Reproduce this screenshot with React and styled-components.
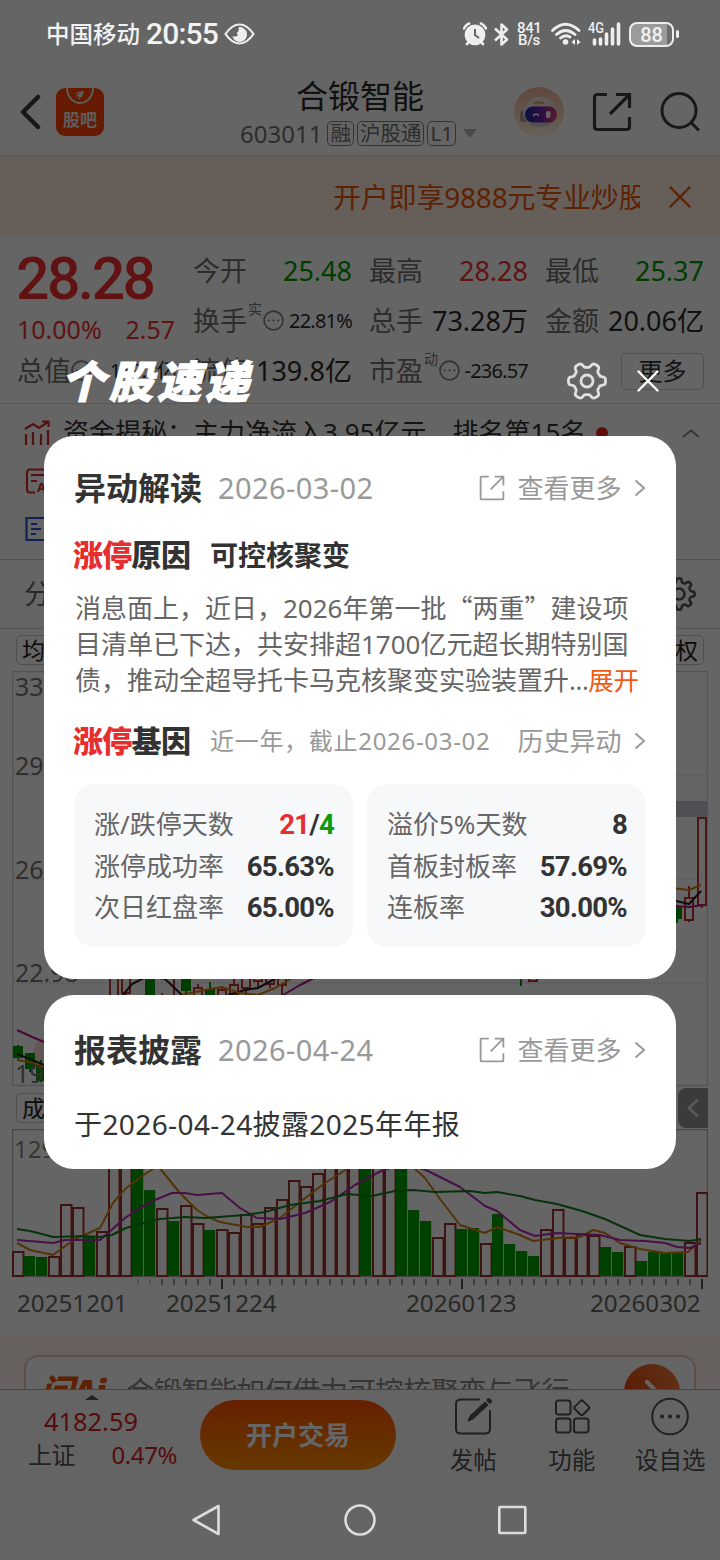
import React from "react";
import styled, { createGlobalStyle } from "styled-components";

const GlobalStyle = createGlobalStyle`
  * {
    box-sizing: border-box;
  }
  body {
    margin: 0;
    font-family: "Noto Sans", "Noto Sans CJK SC", sans-serif;
    line-height: 1.4;
    background: #fff;
  }
  button {
    padding: 0;
    border: 0;
    background: none;
    font-family: inherit;
  }
  svg {
    display: block;
    flex-shrink: 0;
  }
`;

const RED = "#f23030";
const GREEN = "#009c00";

const PhoneDiv = styled.div`
  position: relative;
  width: 720px;
  height: 1560px;
  overflow: hidden;
`;
const PageDiv = styled.div`
  display: flex;
  flex-direction: column;
  height: 1560px;
  background: #fdfdfd;
  color: #333;
`;

/* ---------- 顶部 ---------- */
const HeaderDiv = styled.header`
  display: flex;
  align-items: center;
  height: 157px;
  padding: 68px 20px 0;
  border-bottom: 2px solid #e0e0e0;
`;
const HeaderSideDiv = styled.div`
  display: flex;
  flex: 1;
  align-items: center;
  justify-content: ${(props) => (props.$end ? "flex-end" : "flex-start")};
  gap: ${(props) => (props.$end ? "28px" : "15px")};
`;
const HeaderCenterDiv = styled.div`
  display: flex;
  flex-direction: column;
  align-items: center;
  margin-right: 3px;
`;
const StockNameStrong = styled.strong`
  padding-left: 3px;
  font-size: 32px;
  font-weight: 400;
  line-height: 44px;
  color: #2c2c2c;
`;
const StockCodeDiv = styled.div`
  display: flex;
  align-items: center;
  height: 32px;
  font-size: 24px;
  color: #707070;
`;
const TagSpan = styled.span`
  height: 25px;
  margin-left: 3px;
  padding: 0 2px;
  border: 1.5px solid #808080;
  border-radius: 5px;
  font-size: 20.5px;
  line-height: 22px;
`;
const CodeSpan = styled.span`
  margin-right: 2px;
`;
const ArrowDownI = styled.i`
  margin-left: 7px;
  border: 7px solid transparent;
  border-top: 9px solid #b4b4b4;
  border-bottom: 0;
`;
const BannerDiv = styled.div`
  display: flex;
  align-items: center;
  justify-content: flex-end;
  height: 80px;
  padding-right: 29px;
  gap: 29px;
  background: #ffebdc;
`;
const BannerP = styled.p`
  width: 307px;
  margin: 0;
  overflow: hidden;
  white-space: nowrap;
  font-size: 28px;
  line-height: 40px;
  letter-spacing: -0.2px;
  color: #e8560c;
`;

/* ---------- 行情 ---------- */
const QuoteDiv = styled.section`
  display: grid;
  grid-template-columns: 160px 160px 160px 160px;
  grid-template-rows: 50px 50px 50px;
  column-gap: 16px;
  height: 167px;
  padding: 9px 16px 0;
  border-bottom: 1px solid #dcdcdc;
`;
const PriceStrong = styled.strong`
  font-family: Roboto, sans-serif;
  font-size: 59px;
  font-weight: 500;
  line-height: 65px;
  letter-spacing: -2.6px;
  color: ${RED};
`;
const QuoteCellDiv = styled.div`
  display: flex;
  align-items: center;
  justify-content: space-between;
  height: 50px;
  white-space: nowrap;
  font-size: ${(props) => (props.$small ? "20px" : "27px")};
  letter-spacing: ${(props) => (props.$small ? "-0.8px" : "0")};
  color: ${(props) => props.$color || "#2c2c2c"};
`;
const ChangeDiv = styled(QuoteCellDiv)`
  margin-top: 8px;
  padding: 0 1px;
  font-size: 25px;
`;
const LabelSpan = styled.span`
  display: flex;
  align-items: center;
  padding-left: 1px;
  font-size: 27px;
  letter-spacing: 0;
  color: #707070;
`;
const SupSpan = styled.sup`
  align-self: flex-start;
  margin: -1px 1px 0;
  font-size: 14px;
  line-height: 16px;
`;
const MoreButton = styled.button`
  width: 83px;
  height: 37px;
  margin-left: auto;
  border: 1px solid #c4c8cc;
  border-radius: 5px;
  font-size: 24px;
  line-height: 32px;
  color: #333;
`;
const NewsDiv = styled.section`
  display: flex;
  flex-direction: column;
  height: 156px;
  padding: 5px 20px 0 24px;
  border-bottom: 1px solid #c8c8c8;
`;
const NewsRowDiv = styled.div`
  display: flex;
  align-items: center;
  height: 48px;
  gap: 13px;
  font-size: 26px;
  line-height: 36px;
  white-space: nowrap;
  color: #333;
`;
const NewsSpan = styled.span`
  margin-bottom: 2px;
`;
const DotI = styled.i`
  width: 12px;
  height: 12px;
  margin-left: -3px;
  border-radius: 50%;
  background: #f02020;
`;
const CaretDiv = styled.div`
  margin-left: auto;
`;
const TabsDiv = styled.div`
  display: flex;
  align-items: center;
  justify-content: space-between;
  height: 69px;
  padding: 0 24px;
  border-bottom: 1px solid #d0d0d0;
  font-size: 27px;
  color: #666;
`;
const ToolRowDiv = styled.div`
  display: flex;
  align-items: center;
  justify-content: space-between;
  height: 42px;
  padding: 0 16px;
`;
const ToolButton = styled.button`
  height: 30px;
  padding: 0 5px;
  border: 1px solid #c8c8c8;
  border-radius: 5px;
  font-size: 23px;
  line-height: 27px;
  color: #222;
`;
const ChartDiv = styled.div`
  padding-left: 12px;
`;
const DatesDiv = styled.div`
  display: flex;
  height: 45px;
  padding-left: 17px;
  font-size: 24.2px;
  line-height: 25px;
  color: #666;
`;
const DateSpan = styled.span`
  width: ${(props) => props.$width}px;
`;
const FoldButton = styled.button`
  position: absolute;
  top: 1088px;
  right: 12px;
  display: flex;
  align-items: center;
  justify-content: center;
  width: 30px;
  height: 40px;
  border-radius: 8px 0 0 8px;
  background: #949494;
`;

/* ---------- 底部 ---------- */
const AskDiv = styled.div`
  height: 54px;
  padding: 20px 24px 0;
  overflow: hidden;
  background: #fff1ec;
`;
const AskBoxDiv = styled.div`
  display: flex;
  align-items: center;
  height: 74px;
  padding: 0 14px 0 14px;
  border: 2px solid #f0bdb4;
  border-radius: 14px;
  background: #fdfdfd;
  font-size: 28px;
  letter-spacing: -0.3px;
  color: #888;
`;
const AskLogoSpan = styled.span`
  width: 86px;
  font-size: 34px;
  font-weight: 900;
  font-style: italic;
  letter-spacing: -1px;
  color: #e8560c;
`;
const AskCircleDiv = styled.div`
  display: flex;
  align-items: center;
  justify-content: center;
  width: 56px;
  height: 56px;
  margin-left: auto;
  border-radius: 50%;
  background: linear-gradient(60deg, #e03a00, #f08040);
`;
const BottomDiv = styled.footer`
  display: flex;
  height: 91px;
  border-top: 1px solid #aaa;
  background: #fafafa;
`;
const IndexDiv = styled.div`
  width: 184px;
  padding: 5px 7px 0 28px;
  color: #d81e1e;
`;
const UpI = styled.i`
  display: block;
  width: 0;
  margin: 0 0 0 57px;
  border: 7px solid transparent;
  border-top: 0;
  border-bottom: 5px solid #555;
`;
const IndexValueDiv = styled.div`
  padding: 2px 0 0 16px;
  font-size: 25.4px;
  line-height: 38px;
`;
const IndexRowDiv = styled.div`
  display: flex;
  justify-content: space-between;
  font-size: 24px;
  line-height: 30px;
  letter-spacing: -0.4px;
`;
const IndexNameSpan = styled.span`
  color: #555;
`;
const TradeButton = styled.button`
  width: 196px;
  height: 70px;
  margin: 10px 0 0 16px;
  border-radius: 35px;
  background: linear-gradient(#ff5000, #ff9000);
  font-size: 26px;
  font-weight: 700;
  line-height: 68px;
  color: #fff;
`;
const ActionsDiv = styled.div`
  display: flex;
  margin-left: 28px;
`;
const ActionDiv = styled.div`
  display: flex;
  flex-direction: column;
  align-items: center;
  width: 98.5px;
  padding-top: 6px;
  font-size: 23.5px;
  line-height: 48px;
  white-space: nowrap;
  color: #505050;
`;

/* ---------- 蒙层 ---------- */
const MaskDiv = styled.div`
  position: absolute;
  inset: 0;
  display: flex;
  flex-direction: column;
  background: rgba(0, 0, 0, 0.6);
`;
const StatusDiv = styled.div`
  display: flex;
  align-items: center;
  justify-content: space-between;
  height: 68px;
  padding: 0 41px 0 46px;
  color: #f2f2f2;
`;
const StatusGroupDiv = styled.div`
  display: flex;
  align-items: center;
  gap: ${(props) => props.$gap}px;
`;
const CarrierSpan = styled.span`
  font-size: 23.5px;
  font-weight: 500;
  line-height: 32px;
`;
const ClockSpan = styled.span`
  font-family: Roboto, sans-serif;
  font-size: 30px;
  font-weight: 500;
  line-height: 32px;
  letter-spacing: -0.8px;
`;
const SpeedSpan = styled.span`
  width: 24px;
  margin: 0 3px 0 1px;
  font-family: Roboto, sans-serif;
  font-size: 15px;
  font-weight: 500;
  line-height: 12.5px;
  letter-spacing: -0.4px;
  text-align: center;
`;
const BatteryDiv = styled.div`
  width: 45px;
  height: 25px;
  border: 2px solid #eee;
  border-radius: 8px;
  background: linear-gradient(90deg, #9b9b9b 88%, #6c6c6c 88%);
  font-family: Roboto, sans-serif;
  font-size: 20px;
  font-weight: 500;
  line-height: 22px;
  text-align: center;
`;
const BatteryNubI = styled.i`
  width: 3px;
  height: 8px;
  margin-left: -5px;
  border-radius: 2px;
  background: #eee;
`;
const ModalDiv = styled.section`
  display: flex;
  flex-direction: column;
  height: 1412px;
  padding: 286px 44px 0;
`;
const ModalHeadDiv = styled.div`
  display: flex;
  align-items: center;
  height: 54px;
  margin-bottom: 28px;
  padding: 0 17px;
`;
const ModalTitle = styled.h1`
  flex: 1;
  margin: 0;
  font-size: 44px;
  font-weight: 900;
  font-style: italic;
  line-height: 50px;
  letter-spacing: 4px;
  -webkit-text-stroke: 1px #fff;
  color: #fff;
`;
const CloseButton = styled.button`
  margin-left: 30px;
`;
const CardDiv = styled.article`
  height: ${(props) => props.$height}px;
  margin-bottom: 16px;
  padding: 29px 30px 0;
  border-radius: 30px;
  background: #fff;
`;
const RowDiv = styled.div`
  display: flex;
  align-items: center;
  height: ${(props) => props.$height || 46}px;
  margin-top: ${(props) => props.$top || 0}px;
  white-space: nowrap;
`;
const CardTitle = styled.h2`
  margin: 0 16px 0 0;
  font-size: 32px;
  font-weight: 700;
  line-height: 46px;
  color: #333;
`;
const DateTime = styled.time`
  font-size: ${(props) => props.$size || 29}px;
  letter-spacing: ${(props) => props.$spacing || 0.4}px;
  color: #999;
`;
const LinkA = styled.a`
  display: flex;
  align-items: center;
  margin-left: auto;
  gap: 12.5px;
  font-size: 26px;
  color: #999;
`;
const BadgeTitle = styled.h3`
  width: 137px;
  margin: 0 0 0 -1px;
  font-size: 30px;
  font-weight: 900;
  line-height: 40px;
  letter-spacing: -0.7px;
  color: #333;
`;
const ColorSpan = styled.span`
  color: ${(props) => props.$color};
`;
const ReasonStrong = styled.strong`
  font-size: 28px;
  font-weight: 700;
  line-height: 40px;
  color: #333;
`;
const ReasonP = styled.p`
  margin: 14px 0 0 1px;
  font-size: 26px;
  line-height: 36px;
  white-space: nowrap;
  color: #666;
`;
// 引号需要全角宽度
const QuoteSpan = styled.span`
  font-family: "Noto Sans CJK SC", sans-serif;
  line-height: 1;
`;
const ExpandSpan = styled.span`
  font-size: 25.5px;
  letter-spacing: -0.4px;
  color: #f05a14;
`;
const StatsDiv = styled.div`
  display: grid;
  grid-template-columns: 279px 279px;
  gap: 14px;
  margin-top: 22px;
`;
const StatBoxUl = styled.ul`
  height: 163px;
  margin: 0;
  padding: 20px 19px 0 20px;
  border-radius: 20px;
  background: #f7f8fa;
  list-style: none;
`;
const StatLi = styled.li`
  display: flex;
  justify-content: space-between;
  font-size: 26px;
  line-height: 41.5px;
  white-space: nowrap;
  color: #666;
`;
const StatStrong = styled.strong`
  font-family: Roboto, sans-serif;
  font-size: 27.5px;
  font-weight: 700;
  letter-spacing: -0.7px;
  color: #333;
`;
const ReportP = styled.p`
  margin: 26px 0 0;
  font-size: 28px;
  line-height: 44px;
  letter-spacing: 0.4px;
  color: #333;
`;
const NavDiv = styled.nav`
  display: flex;
  align-items: center;
  justify-content: center;
  height: 80px;
  gap: 122px;
`;

/* ---------- 图标 ---------- */
function gearPath(c, r, depth, teeth) {
  const points = [];
  for (let i = 0; i < 240; i += 1) {
    const t = (i / 240) * Math.PI * 2;
    const k = r - depth / 2 + (depth / 2) * Math.tanh(2.2 * Math.cos(teeth * t));
    points.push(`${(c + k * Math.cos(t)).toFixed(2)} ${(c + k * Math.sin(t)).toFixed(2)}`);
  }
  return `M${points.join("L")}Z`;
}

function GearIcon({ size, teeth, depth, hole, color, width }) {
  const c = size / 2;
  return (
    <svg width={size} height={size} fill="none" stroke={color} strokeWidth={width} strokeLinejoin="round">
      <path d={gearPath(c, c - width / 2, depth, teeth)} />
      <circle cx={c} cy={c} r={hole} />
    </svg>
  );
}

function ShareIcon({ size, color, width, radius }) {
  return (
    <svg width={size} height={size} viewBox="0 0 40 40" fill="none" stroke={color} strokeWidth={width} strokeLinecap="butt">
      <path d={`M15 2.5H${2.5 + radius}Q2.5 2.5 2.5 ${2.5 + radius}V${37.5 - radius}Q2.5 37.5 ${2.5 + radius} 37.5H${37.5 - radius}Q37.5 37.5 37.5 ${37.5 - radius}V25`} />
      <path d="M24 2.5H37.5V16M37 3L18 22" />
    </svg>
  );
}

function MoreDotsIcon({ size, stroke = 1.6 }) {
  return (
    <svg width={size} height={size} viewBox="0 0 20 20" fill="none" stroke="#808080" strokeWidth={stroke}>
      <circle cx="10" cy="10" r="9" />
      <path d="M5.4 10h.1M10 10h.1M14.5 10h.1" strokeWidth="2" strokeLinecap="round" />
    </svg>
  );
}

function ChevronIcon() {
  return (
    <svg width="12" height="18" fill="none" stroke="#999" strokeWidth="2">
      <path d="M1.5 1.5L10 9L1.5 16.5" />
    </svg>
  );
}

function CloseIcon({ color, width }) {
  return (
    <svg width="22" height="22" fill="none" stroke={color} strokeWidth={width} strokeLinecap="round">
      <path d="M1.5 1.5L20.5 20.5M20.5 1.5L1.5 20.5" />
    </svg>
  );
}

function GubaLogo() {
  return (
    <svg width="48" height="48">
      <rect width="48" height="48" rx="9" fill="#ff4400" />
      <path d="M11 0A13 15 0 0 0 37 0" fill="none" stroke="#e8e8e8" strokeWidth="2" />
      <path d="M18 6Q23 3 28 3Q27 9 22 12L23 8L19 9L24 5Z" fill="#e8e8e8" />
      <text x="24" y="37.5" textAnchor="middle" fontSize="17" fontWeight="700" fill="#e8e8e8">股吧</text>
    </svg>
  );
}

function RobotAvatar() {
  return (
    <svg width="50" height="50">
      <defs>
        <linearGradient id="robotBg" x1="0" y1="0" x2="0" y2="1">
          <stop offset="0" stopColor="#f0b496" />
          <stop offset="1" stopColor="#fff0dc" />
        </linearGradient>
        <linearGradient id="robotFace">
          <stop offset="0" stopColor="#1c2a9c" />
          <stop offset="0.5" stopColor="#6c1ea8" />
          <stop offset="1" stopColor="#e8446c" />
        </linearGradient>
        <linearGradient id="robotHead" x1="0" y1="0" x2="0" y2="1">
          <stop offset="0" stopColor="#f4e8e4" />
          <stop offset="1" stopColor="#c4c4cc" />
        </linearGradient>
      </defs>
      <circle cx="25" cy="25" r="25" fill="url(#robotBg)" />
      <rect x="6" y="23" width="8" height="12" rx="4" fill="#a0a0a8" />
      <ellipse cx="26" cy="25" rx="17" ry="15" fill="url(#robotHead)" />
      <path d="M20 16.5Q25 14 30 16.5" stroke="#f0a060" strokeWidth="2.5" fill="none" />
      <rect x="11" y="19.5" width="32" height="16" rx="8" fill="url(#robotFace)" />
      <path d="M19 29Q22 25 25 29" stroke="#fff" strokeWidth="1.6" fill="none" />
      <rect x="32" y="24" width="4.5" height="7" rx="2" fill="#fff" />
    </svg>
  );
}

function StatusIcons() {
  return (
    <>
      <svg width="24" height="25" viewBox="0 0 24 25">
        <path d="M1 6.5Q3 2.5 6 1.5M23 6.5Q21 2.5 18 1.5M4 22l3-3M20 22l-3-3" stroke="#eee" strokeWidth="2.6" strokeLinecap="round" fill="none" />
        <circle cx="12" cy="12.8" r="10.4" fill="#eee" />
        <path d="M12 7V13L16 16" stroke="#666" strokeWidth="2" fill="none" />
      </svg>
      <svg width="15" height="25" viewBox="0 0 15 25" fill="none" stroke="#eee" strokeWidth="2.6" strokeLinejoin="round">
        <path d="M1 6.5L13 17.5L7.5 22.5V2.5L13 7.5L1 18.5" />
      </svg>
    </>
  );
}

function WifiIcon() {
  return (
    <svg width="30" height="24" fill="none" stroke="#eee" strokeWidth="2.8" strokeLinecap="round">
      <path d="M1.5 8.5Q14.5 -4 28 8.5M5.5 12.5Q14.5 4.5 24 12.5M9.5 16Q14.5 12 19 15" />
      <circle cx="14.5" cy="20" r="2.8" fill="#eee" stroke="none" />
      <path d="M24 17V23L20.5 20ZM26 17L29.5 20L26 23Z" fill="#eee" stroke="none" />
    </svg>
  );
}

function SignalIcon() {
  return (
    <svg width="34" height="24">
      <text x="0" y="11" fontFamily="Roboto" fontSize="14" fontWeight="500" fill="#eee" textLength="16" lengthAdjust="spacingAndGlyphs">4G</text>
      <path d="M6.5 18V22M12.5 17V22M18.5 12V22M24.5 7V22M30.5 2V22" stroke="#eee" strokeWidth="3.6" strokeLinecap="round" />
    </svg>
  );
}

function EyeIcon() {
  return (
    <svg width="31" height="22" viewBox="0 0 31 22">
      <path d="M1.5 11Q8 1.5 15.5 1.5T29.5 11Q23 20.5 15.5 20.5T1.5 11Z" fill="none" stroke="#eee" strokeWidth="2.2" />
      <path d="M14.5 4.2A7.4 7.4 0 1 1 8.4 13Q12 14.5 14 12Q12.5 11 13 9.5Q15.5 8 14.5 4.2Z" fill="#eee" />
    </svg>
  );
}

/* ---------- 图表 ---------- */
// [方向, 柱顶 y]，r 为阳线，g 为阴线
const volumes = [
  ["r", 1252], ["g", 1256], ["g", 1257], ["r", 1257], ["r", 1205], ["r", 1208], ["g", 1237], ["r", 1232],
  ["r", 1160], ["r", 1150], ["g", 1145], ["g", 1190], ["r", 1209], ["g", 1221], ["r", 1206], ["r", 1224],
  ["g", 1230], ["r", 1230], ["r", 1233], ["r", 1215], ["r", 1224], ["r", 1208], ["r", 1200], ["r", 1181],
  ["r", 1187], ["r", 1174], ["r", 1165], ["r", 1158], ["r", 1152], ["g", 1148], ["r", 1150], ["r", 1155],
  ["g", 1160], ["g", 1210], ["g", 1221], ["r", 1238], ["r", 1224], ["g", 1229], ["g", 1228], ["r", 1244],
  ["g", 1214], ["g", 1244], ["g", 1251], ["g", 1256], ["r", 1230], ["r", 1210], ["r", 1238], ["r", 1235],
  ["r", 1236], ["g", 1247], ["g", 1252], ["r", 1247], ["g", 1261], ["g", 1252], ["g", 1253], ["g", 1252],
  ["r", 1243], ["r", 1193],
];
const volumeLines = [
  ["#d08010", "17,1243 30,1250 53,1255 75,1239 100,1228 113,1203 125,1189 145,1174 158,1166 180,1193 197,1210 208,1217 220,1222 247,1227 260,1227 280,1218 300,1202 325,1183 347,1169 380,1150 414,1168 425,1178 440,1199 460,1225 485,1233 497,1227 520,1235 533,1241 558,1238 580,1237 593,1230 605,1233 620,1243 640,1249 665,1253 688,1252 701,1240"],
  ["#b428b4", "17,1240 53,1243 65,1240 100,1240 125,1218 140,1208 155,1200 172,1193 185,1193 197,1195 222,1193 240,1208 257,1218 280,1219 305,1213 330,1202 355,1185 383,1170 405,1164 426,1170 460,1187 485,1206 497,1211 520,1230 535,1236 557,1233 600,1235 620,1240 645,1241 665,1243 677,1247 690,1248 701,1243"],
  ["#10801c", "17,1229 30,1231 42,1234 53,1237 85,1236 100,1237 112,1235 126,1228 140,1224 160,1219 185,1217 205,1218 245,1215 265,1212 290,1205 320,1201 347,1194 372,1196 395,1191 413,1190 435,1192 470,1191 485,1193 497,1192 520,1196 535,1200 557,1204 582,1211 605,1219 640,1235 665,1239 690,1241 701,1239"],
];
// [方向, x, 开/收上沿, 下沿, 影线高, 影线低]
const candles = [
  ["g", 13, 1047, 1057, 1045, 1060], ["g", 25, 1054, 1068, 1054, 1072], ["g", 36, 1067, 1080, 1060, 1082],
  ["r", 109, 960, 1010, 960, 1010], ["r", 121, 970, 993, 970, 998], ["g", 145, 960, 1000, 960, 1000],
  ["r", 157, 996, 1010, 993, 1010], ["r", 169, 1000, 1010, 979, 1010], ["g", 181, 970, 990, 970, 995],
  ["r", 193, 988, 1000, 984, 1000], ["g", 205, 990, 1000, 982, 1000], ["r", 217, 990, 1000, 988, 1000],
  ["r", 229, 985, 994, 976, 996], ["r", 241, 973, 988, 970, 995], ["r", 253, 970, 981, 970, 988],
  ["r", 265, 978, 984, 970, 988], ["r", 277, 968, 985, 965, 995], ["g", 516, 960, 978, 960, 986],
  ["r", 528, 970, 981, 970, 981], ["g", 672, 908, 918, 905, 923], ["r", 684, 898, 920, 886, 922],
  ["r", 697, 818, 905, 818, 908],
];
const priceLines = [
  ["#222", "17,1054 30,1059 44,1065"],
  ["#d08010", "17,1060 30,1062 44,1067"],
  ["#b4148c", "17,1030 30,1036 44,1042"],
  ["#222", "122,996 132,984 148,976 165,979 183,996"],
  ["#222", "228,995 245,990 258,988 280,976"],
  ["#d08010", "182,995 205,990 222,987 240,993 258,995 275,988 294,977"],
  ["#b4148c", "283,995 300,985 318,976"],
  ["#222", "672,900 689,904 701,891"],
  ["#d08010", "672,888 689,890 701,885"],
  ["#b4148c", "672,906 689,907 703,905"],
];
const priceLabels = [
  ["33", 696],
  ["29", 775],
  ["26", 879],
  ["22.98", 982],
  ["19", 1083],
];

function Lines({ lines }) {
  return lines.map(([color, points]) => (
    <polyline key={points} points={points} fill="none" stroke={color} strokeWidth="2" strokeLinejoin="round" />
  ));
}

function PriceChart() {
  return (
    <svg width="696" height="416" viewBox="12 671 696 416">
      <rect x="12.5" y="671.5" width="695" height="414" fill="none" stroke="#d0d0d0" strokeWidth="1.5" />
      <path d="M13 775H707M13 879H707M13 983H707" stroke="#c8c8c8" strokeDasharray="2 2" />
      <rect x="600" y="801" width="107" height="16" fill="#c3c8cf" />
      <circle cx="48" cy="1052" r="15" fill="#f8dcd4" />
      {candles.map(([type, x, top, bottom, high, low]) => (
        <g key={`${type}${x}`} stroke={type === "r" ? "#c43434" : GREEN} strokeWidth="2">
          <path d={`M${x + 5} ${high}V${top}M${x + 5} ${bottom}V${low}`} />
          <rect x={x + 1} y={top} width="8" height={bottom - top} fill={type === "r" ? "none" : GREEN} />
        </g>
      ))}
      <Lines lines={priceLines} />
      {priceLabels.map(([text, y]) => (
        <text key={text} x="15" y={y} fontSize="25" fill="#777">{text}</text>
      ))}
    </svg>
  );
}

function VolumeChart() {
  return (
    <svg width="696" height="161" viewBox="12 1129 696 161">
      <rect x="12.5" y="1129.5" width="695" height="147" fill="none" stroke="#b4b4b4" strokeWidth="1.5" />
      <text x="14" y="1158" fontSize="24" fill="#888">129万</text>
      {volumes.map(([type, top], i) =>
        type === "r" ? (
          <rect key={i} x={13 + i * 12} y={top} width="10.5" height={1276 - top} fill="none" stroke="#a03030" strokeWidth="2" />
        ) : (
          <rect key={i} x={12 + i * 12} y={top} width="11.2" height={1276 - top} fill="#00a000" />
        )
      )}
      <Lines lines={volumeLines} />
      {Array.from({ length: 48 }, (_, i) => {
        const x = 138 + i * 12;
        const major = x === 222 || x === 462 || x === 702;
        const color = i < 2 ? "#d0d0d0" : "#999";
        return <path key={x} d={`M${x} 1279V${major ? 1289 : 1285}`} stroke={major ? "#555" : color} strokeWidth="2" />;
      })}
    </svg>
  );
}

function QuoteCell({ label, sup, value, color, small }) {
  return (
    <QuoteCellDiv $color={color} $small={small}>
      <LabelSpan>
        {label}
        {sup && <SupSpan>{sup}</SupSpan>}
        {sup && <MoreDotsIcon size={21} />}
      </LabelSpan>
      <span>{value}</span>
    </QuoteCellDiv>
  );
}

const stats = [
  [
    ["涨停成功率", "65.63%"],
    ["次日红盘率", "65.00%"],
  ],
  [
    ["溢价5%天数", "8"],
    ["首板封板率", "57.69%"],
    ["连板率", "30.00%"],
  ],
];

function StatRow({ label, children }) {
  return (
    <StatLi>
      <span>{label}</span>
      <StatStrong>{children}</StatStrong>
    </StatLi>
  );
}

function MoreLink() {
  return (
    <LinkA>
      <ShareIcon size={26} color="#999" width={2.8} radius={1} />
      查看更多
      <ChevronIcon />
    </LinkA>
  );
}

function StockPage() {
  return (
    <PageDiv>
      <HeaderDiv>
        <HeaderSideDiv>
          <svg width="21" height="36" fill="none" stroke="#3c3c3c" strokeWidth="4.5" strokeLinecap="round" strokeLinejoin="round">
            <path d="M18 3L3 18L18 33" />
          </svg>
          <GubaLogo />
        </HeaderSideDiv>
        <HeaderCenterDiv>
          <StockNameStrong>合锻智能</StockNameStrong>
          <StockCodeDiv>
            <CodeSpan>603011</CodeSpan>
            <TagSpan>融</TagSpan>
            <TagSpan>沪股通</TagSpan>
            <TagSpan>L1</TagSpan>
            <ArrowDownI />
          </StockCodeDiv>
        </HeaderCenterDiv>
        <HeaderSideDiv $end>
          <RobotAvatar />
          <ShareIcon size={40} color="#3c3c3c" width={3.2} radius={3} />
          <svg width="40" height="40" fill="none" stroke="#3c3c3c" strokeWidth="3" strokeLinecap="round">
            <circle cx="19" cy="18.5" r="17" />
            <path d="M31.5 31L38 37.5" />
          </svg>
        </HeaderSideDiv>
      </HeaderDiv>
      <BannerDiv>
        <BannerP>开户即享9888元专业炒股大礼包</BannerP>
        <CloseIcon color="#e8560c" width={2.4} />
      </BannerDiv>
      <QuoteDiv>
        <PriceStrong>28.28</PriceStrong>
        <QuoteCell label="今开" value="25.48" color={GREEN} />
        <QuoteCell label="最高" value="28.28" color={RED} />
        <QuoteCell label="最低" value="25.37" color={GREEN} />
        <ChangeDiv $color={RED}>
          <span>10.00%</span>
          <span>2.57</span>
        </ChangeDiv>
        <QuoteCell label="换手" sup="实" value="22.81%" small />
        <QuoteCell label="总手" value="73.28万" />
        <QuoteCell label="金额" value="20.06亿" />
        <QuoteCellDiv $small>
          <LabelSpan>
            总值
            <MoreDotsIcon size={21} />
          </LabelSpan>
          <span>139.8亿</span>
        </QuoteCellDiv>
        <QuoteCell label="流值" value="139.8亿" />
        <QuoteCell label="市盈" sup="动" value="-236.57" small />
        <QuoteCellDiv>
          <MoreButton type="button">更多</MoreButton>
        </QuoteCellDiv>
      </QuoteDiv>
      <NewsDiv>
        <NewsRowDiv>
          <svg width="26" height="26" fill="none" stroke="#d02c2c" strokeWidth="2.2">
            <path d="M2 14V25M9 12V25M17 14V25M24 10V25M1 9L9 4L15 8L24 2M18 1.5H24.5V7" />
          </svg>
          <NewsSpan>资金揭秘：主力净流入3.95亿元，排名第15名</NewsSpan>
          <DotI />
          <CaretDiv>
            <svg width="18" height="9" fill="none" stroke="#888" strokeWidth="2">
              <path d="M1 8L9 1.5L17 8" />
            </svg>
          </CaretDiv>
        </NewsRowDiv>
        <NewsRowDiv>
          <svg width="26" height="26" fill="none" stroke="#d82828" strokeWidth="2.2">
            <path d="M11 24.5H6Q3 24.5 3 21V5Q3 1.5 6 1.5H24M7 7H20M7 13H13" />
            <text x="13" y="24" fontSize="13" fontWeight="700" fill="#d82828" stroke="none">A</text>
          </svg>
        </NewsRowDiv>
        <NewsRowDiv>
          <svg width="26" height="26" fill="none" stroke="#2c50d8" strokeWidth="2.2">
            <path d="M2.5 2H24V24H2.5ZM7 8H13M7 13H17M7 18H12" />
          </svg>
        </NewsRowDiv>
      </NewsDiv>
      <TabsDiv>
        <span>分时</span>
        <GearIcon size={34} teeth={8} depth={4} hole={5.5} color="#555" width={2.6} />
      </TabsDiv>
      <ToolRowDiv>
        <ToolButton>均线</ToolButton>
        <ToolButton>除权</ToolButton>
      </ToolRowDiv>
      <ChartDiv>
        <PriceChart />
      </ChartDiv>
      <ToolRowDiv>
        <ToolButton>成交量</ToolButton>
      </ToolRowDiv>
      <ChartDiv>
        <VolumeChart />
      </ChartDiv>
      <DatesDiv>
        <DateSpan $width={149}>20251201</DateSpan>
        <DateSpan $width={240}>20251224</DateSpan>
        <DateSpan $width={184}>20260123</DateSpan>
        <DateSpan $width={120}>20260302</DateSpan>
      </DatesDiv>
      <AskDiv>
        <AskBoxDiv>
          <AskLogoSpan>问Ai</AskLogoSpan>
          合锻智能如何借力可控核聚变与飞行
          <AskCircleDiv>
            <svg width="14" height="24" fill="none" stroke="#fff" strokeWidth="4" strokeLinecap="round">
              <path d="M2 2L12 12L2 22" />
            </svg>
          </AskCircleDiv>
        </AskBoxDiv>
      </AskDiv>
      <BottomDiv>
        <IndexDiv>
          <UpI />
          <IndexValueDiv>4182.59</IndexValueDiv>
          <IndexRowDiv>
            <IndexNameSpan>上证</IndexNameSpan>
            <span>0.47%</span>
          </IndexRowDiv>
        </IndexDiv>
        <TradeButton type="button">开户交易</TradeButton>
        <ActionsDiv>
          <ActionDiv>
            <svg width="40" height="40" fill="none" stroke="#505050" strokeWidth="2">
              <path d="M27 3.5H8Q3 3.5 3 8V33Q3 37.5 8 37.5H32Q37 37.5 37 33V14" />
              <path d="M15 25L17 20L32 6L35 9L20 23Z" fill="#505050" strokeWidth="1" />
              <path d="M35.5 4L37 5.5" strokeWidth="4" strokeLinecap="round" />
            </svg>
            发帖
          </ActionDiv>
          <ActionDiv>
            <svg width="40" height="40" fill="none" stroke="#505050" strokeWidth="2">
              <rect x="4" y="4.5" width="14.5" height="14" rx="2.5" />
              <rect x="4" y="22.5" width="14.5" height="14" rx="2.5" />
              <rect x="22" y="22.5" width="14.5" height="14" rx="2.5" />
              <rect x="24" y="6" width="11.5" height="11.5" rx="2" transform="rotate(45 29.7 11.8)" />
            </svg>
            功能
          </ActionDiv>
          <ActionDiv>
            <svg width="40" height="40" fill="none" stroke="#505050" strokeWidth="2">
              <circle cx="20" cy="20.5" r="17.8" />
              <path d="M12 20.5h.1M20 20.5h.1M28 20.5h.1" strokeWidth="4" strokeLinecap="round" />
            </svg>
            设自选
          </ActionDiv>
        </ActionsDiv>
      </BottomDiv>
    </PageDiv>
  );
}

export default function App() {
  return (
    <PhoneDiv>
      <GlobalStyle />
      <StockPage />
      <FoldButton type="button">
        <svg width="12" height="20" fill="none" stroke="#ddd" strokeWidth="2.8">
          <path d="M11 1.5L2 10L11 18.5" />
        </svg>
      </FoldButton>
      <MaskDiv>
        <StatusDiv>
          <StatusGroupDiv $gap={6}>
            <CarrierSpan>中国移动</CarrierSpan>
            <ClockSpan>20:55</ClockSpan>
            <EyeIcon />
          </StatusGroupDiv>
          <StatusGroupDiv $gap={7}>
            <StatusIcons />
            <SpeedSpan>
              841
              <br />
              B/s
            </SpeedSpan>
            <WifiIcon />
            <SignalIcon />
            <BatteryDiv>88</BatteryDiv>
            <BatteryNubI />
          </StatusGroupDiv>
        </StatusDiv>
        <ModalDiv>
          <ModalHeadDiv>
            <ModalTitle>个股速递</ModalTitle>
            <GearIcon size={40} teeth={6} depth={5} hole={6} color="#e0e0e0" width={2.8} />
            <CloseButton type="button">
              <CloseIcon color="#fff" width={2.4} />
            </CloseButton>
          </ModalHeadDiv>
          <CardDiv $height={543}>
            <RowDiv>
              <CardTitle>异动解读</CardTitle>
              <DateTime>2026-03-02</DateTime>
              <MoreLink />
            </RowDiv>
            <RowDiv $top={23} $height={42}>
              <BadgeTitle>
                <ColorSpan $color="#e62e2e">涨停</ColorSpan>原因
              </BadgeTitle>
              <ReasonStrong>可控核聚变</ReasonStrong>
            </RowDiv>
            <ReasonP>
              消息面上，近日，2026年第一批<QuoteSpan>“两重”</QuoteSpan>建设项
              <br />
              目清单已下达，共安排超1700亿元超长期特别国
              <br />
              债，推动全超导托卡马克核聚变实验装置升
              <ExpandSpan as="span" style={undefined}>
                <ColorSpan $color="#666">...</ColorSpan>展开
              </ExpandSpan>
            </ReasonP>
            <RowDiv $top={22} $height={42}>
              <BadgeTitle>
                <ColorSpan $color="#e62e2e">涨停</ColorSpan>基因
              </BadgeTitle>
              <DateTime $size={24} $spacing={0.7}>近一年，截止2026-03-02</DateTime>
              <LinkA>
                历史异动
                <ChevronIcon />
              </LinkA>
            </RowDiv>
            <StatsDiv>
              <StatBoxUl>
                <StatRow label="涨/跌停天数">
                  <ColorSpan $color="#e62e2e">21</ColorSpan>/<ColorSpan $color="#0a9c0a">4</ColorSpan>
                </StatRow>
                {stats[0].map(([label, value]) => (
                  <StatRow key={label} label={label}>{value}</StatRow>
                ))}
              </StatBoxUl>
              <StatBoxUl>
                {stats[1].map(([label, value]) => (
                  <StatRow key={label} label={label}>{value}</StatRow>
                ))}
              </StatBoxUl>
            </StatsDiv>
          </CardDiv>
          <CardDiv $height={174}>
            <RowDiv $height={52}>
              <CardTitle>报表披露</CardTitle>
              <DateTime>2026-04-24</DateTime>
              <MoreLink />
            </RowDiv>
            <ReportP>于2026-04-24披露2025年年报</ReportP>
          </CardDiv>
        </ModalDiv>
        <NavDiv>
          <svg width="30" height="34" fill="none" stroke="#ddd" strokeWidth="2.6" strokeLinejoin="round">
            <path d="M26.5 3V31L1.5 17Z" />
          </svg>
          <svg width="32" height="32" fill="none" stroke="#ddd" strokeWidth="2.6">
            <circle cx="16" cy="16" r="14.5" />
          </svg>
          <svg width="30" height="30" fill="none" stroke="#ddd" strokeWidth="2.6">
            <rect x="1.3" y="2" width="26" height="26" rx="1" />
          </svg>
        </NavDiv>
      </MaskDiv>
    </PhoneDiv>
  );
}
